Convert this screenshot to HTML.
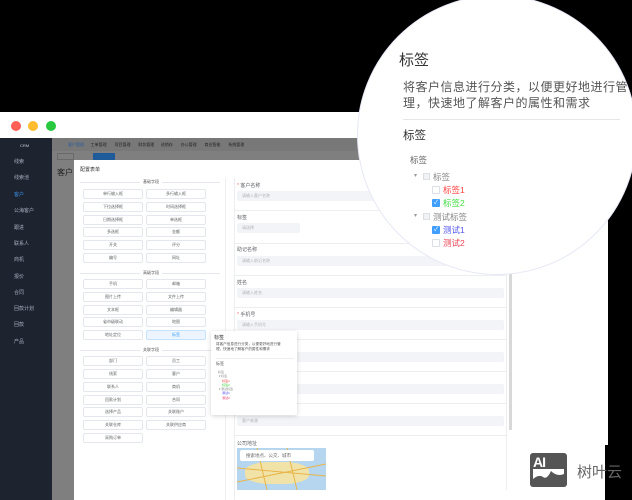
<!DOCTYPE html>
<html><head><meta charset="utf-8"><style>
*{margin:0;padding:0;box-sizing:border-box}
body{width:632px;height:500px;background:#000;position:relative;overflow:hidden;font-family:"Liberation Sans","Noto Sans CJK SC",sans-serif;color:#333}
.a{position:absolute}
.t{position:absolute;white-space:nowrap}
.btn{position:absolute;width:60px;height:10px;border:1px solid #e4e7ed;border-radius:2px;font-size:4px;line-height:8px;text-align:center;color:#606266;background:#fff}
.side{position:absolute;left:14px;font-size:5px;color:#aab;white-space:nowrap}
.lbl{position:absolute;left:237px;font-size:5px;color:#606266}
.inp{position:absolute;left:237px;width:267px;height:10px;background:#f3f4f7;border-radius:2px;font-size:4px;color:#b0b3b8;line-height:10px;padding-left:5px}
.sep{position:absolute;left:234px;width:273px;height:1px;background:#eceef2}
.tr{font-size:8.5px}
</style></head><body>
<div class="a" style="left:0;top:112px;width:608px;height:388px;background:#fff"></div>
<div class="a" style="left:11px;top:121px;width:10px;height:10px;border-radius:50%;background:#fe5f57"></div>
<div class="a" style="left:28px;top:121px;width:10px;height:10px;border-radius:50%;background:#febc2e"></div>
<div class="a" style="left:46px;top:121px;width:10px;height:10px;border-radius:50%;background:#28c840"></div>
<div class="a" style="left:0;top:138px;width:52px;height:362px;background:#1d2430"></div>
<div class="t" style="left:20px;top:143px;font-size:4px;color:#ccd">CRM</div>
<div class="side" style="top:158px">线索</div>
<div class="side" style="top:174px">线索池</div>
<div class="side" style="top:191px;color:#3a8ee6">客户</div>
<div class="side" style="top:207px">公海客户</div>
<div class="side" style="top:224px">跟进</div>
<div class="side" style="top:240px">联系人</div>
<div class="side" style="top:256px">商机</div>
<div class="side" style="top:273px">报价</div>
<div class="side" style="top:289px">合同</div>
<div class="side" style="top:305px">回款计划</div>
<div class="side" style="top:321px">回款</div>
<div class="side" style="top:338px">产品</div>
<div class="a" style="left:52px;top:138px;width:556px;height:362px;background:#7f7f7f"></div>
<div class="a" style="left:52px;top:138px;width:556px;height:13px;background:#787878"></div>
<div class="t" style="left:68px;top:142px;font-size:4px;color:#2a5d99">客户管理 &nbsp;&nbsp;&nbsp;&nbsp; <span style="color:#222">工单管理 &nbsp;&nbsp;&nbsp;&nbsp;&nbsp; 项目管理 &nbsp;&nbsp;&nbsp;&nbsp;&nbsp; 财务管理 &nbsp;&nbsp;&nbsp;&nbsp; 进销存 &nbsp;&nbsp;&nbsp;&nbsp;&nbsp; 办公管理 &nbsp;&nbsp;&nbsp;&nbsp;&nbsp; 商业智能 &nbsp;&nbsp;&nbsp;&nbsp;&nbsp; 系统管理</span></div>
<div class="a" style="left:57px;top:153px;width:17px;height:7px;border:1px solid #6a6a6a;font-size:3px"></div>
<div class="a" style="left:93px;top:153px;width:22px;height:7px;background:#1f5a99"></div>
<div class="t" style="left:57px;top:167px;font-size:8px;color:#222">客户</div>
<div class="a" style="left:74px;top:160px;width:534px;height:340px;background:#fff"></div>
<div class="t" style="left:80px;top:166px;font-size:5px;color:#333">配置表单</div>
<div class="a" style="left:225px;top:178px;width:1px;height:322px;background:#eceef2"></div>
<div class="a" style="left:80px;top:182px;width:140px;height:1px;background:#e4e7ed"></div>
<div class="t" style="left:140px;top:179px;font-size:4px;color:#555;background:#fff;padding:0 3px">基础字段</div>
<div class="a" style="left:80px;top:273px;width:140px;height:1px;background:#e4e7ed"></div>
<div class="t" style="left:140px;top:270px;font-size:4px;color:#555;background:#fff;padding:0 3px">高级字段</div>
<div class="a" style="left:80px;top:350px;width:140px;height:1px;background:#e4e7ed"></div>
<div class="t" style="left:140px;top:347px;font-size:4px;color:#555;background:#fff;padding:0 3px">关联字段</div>
<div class="btn" style="left:83px;top:189px">单行输入框</div><div class="btn" style="left:146px;top:189px">多行输入框</div>
<div class="btn" style="left:83px;top:202px">下拉选择框</div><div class="btn" style="left:146px;top:202px">时间选择框</div>
<div class="btn" style="left:83px;top:215px">日期选择框</div><div class="btn" style="left:146px;top:215px">单选框</div>
<div class="btn" style="left:83px;top:227px">多选框</div><div class="btn" style="left:146px;top:227px">金额</div>
<div class="btn" style="left:83px;top:240px">开关</div><div class="btn" style="left:146px;top:240px">评分</div>
<div class="btn" style="left:83px;top:253px">编号</div><div class="btn" style="left:146px;top:253px">网址</div>
<div class="btn" style="left:83px;top:279px">手机</div><div class="btn" style="left:146px;top:279px">邮箱</div>
<div class="btn" style="left:83px;top:292px">图片上传</div><div class="btn" style="left:146px;top:292px">文件上传</div>
<div class="btn" style="left:83px;top:305px">文本框</div><div class="btn" style="left:146px;top:305px">编辑器</div>
<div class="btn" style="left:83px;top:317px">省市级联动</div><div class="btn" style="left:146px;top:317px">地图</div>
<div class="btn" style="left:83px;top:330px">地址定位</div><div class="btn" style="left:146px;top:330px;background:#ecf5ff;border-color:#c6e2ff;color:#409eff">标签</div>
<div class="btn" style="left:83px;top:356px">部门</div><div class="btn" style="left:146px;top:356px">员工</div>
<div class="btn" style="left:83px;top:369px">线索</div><div class="btn" style="left:146px;top:369px">客户</div>
<div class="btn" style="left:83px;top:382px">联系人</div><div class="btn" style="left:146px;top:382px">商机</div>
<div class="btn" style="left:83px;top:395px">回款计划</div><div class="btn" style="left:146px;top:395px">合同</div>
<div class="btn" style="left:83px;top:407px">选择产品</div><div class="btn" style="left:146px;top:407px">关联账户</div>
<div class="btn" style="left:83px;top:420px">关联仓库</div><div class="btn" style="left:146px;top:420px">关联供应商</div>
<div class="btn" style="left:83px;top:433px">采购订单</div>
<div class="a" style="left:234px;top:178px;width:273px;height:322px;border-left:1px solid #eceef2;border-right:1px solid #eceef2"></div>
<div class="lbl" style="top:182px"><span style="color:#f56c6c">* </span>客户名称</div>
<div class="inp" style="top:191px">请输入客户名称</div>
<div class="sep" style="top:210px"></div>
<div class="lbl" style="top:214px">标签</div>
<div class="inp" style="top:223px;width:63px">请选择</div>
<div class="sep" style="top:243px"></div>
<div class="lbl" style="top:246px">助记名称</div>
<div class="inp" style="top:256px">请输入助记名称</div>
<div class="sep" style="top:275px"></div>
<div class="lbl" style="top:279px">姓名</div>
<div class="inp" style="top:288px">请输入姓名</div>
<div class="sep" style="top:307px"></div>
<div class="lbl" style="top:311px"><span style="color:#f56c6c">* </span>手机号</div>
<div class="inp" style="top:320px">请输入手机号</div>
<div class="sep" style="top:339px"></div>
<div class="inp" style="top:352px"></div>
<div class="sep" style="top:371px"></div>
<div class="inp" style="top:384px"></div>
<div class="sep" style="top:403px"></div>
<div class="inp" style="top:416px">客户来源</div>
<div class="sep" style="top:435px"></div>
<div class="lbl" style="top:440px">公司地址</div>
<div class="a" style="left:237px;top:448px;width:89px;height:42px;background:#b5d6ee;overflow:hidden">
<div class="a" style="left:8px;top:14px;width:64px;height:22px;background:#f1e3a8;border-radius:40%"></div>
<svg class="a" style="left:0;top:0" width="89" height="42"><path d="M0 20 L89 28 M20 0 L30 42 M50 0 L60 42 M0 34 L89 16" stroke="#e8b54a" stroke-width="1" fill="none"/></svg>
<div class="a" style="left:3px;top:2px;width:74px;height:11px;background:#fff;font-size:4.5px;color:#666;line-height:11px;padding-left:6px;border-radius:2px">搜索地点、公交、城市</div></div>
<div class="a" style="left:237px;top:490px;width:271px;height:10px;background:#fff"></div>
<div class="a" style="left:509px;top:260px;width:3px;height:170px;background:#d8d8d8"></div>
<div class="a" style="left:211px;top:331px;width:86px;height:84px;background:#fff;box-shadow:0 1px 5px rgba(0,0,0,.18);border-radius:2px"></div>
<div class="t" style="left:214px;top:334px;font-size:5px;color:#333">标签</div>
<div class="t" style="left:216px;top:342px;font-size:3.6px;color:#555;line-height:5px">将客户信息进行分类，以便更好地进行管<br>理，快速地了解客户的属性和需求</div>
<div class="a" style="left:216px;top:358px;width:78px;height:1px;background:#eee"></div>
<div class="t" style="left:216px;top:361px;font-size:4px;color:#555">标签</div>
<div class="t" style="left:218px;top:370px;font-size:3px;color:#888;line-height:4.3px">标签<br>&nbsp;▾ 标签<br>&nbsp;&nbsp;&nbsp;&nbsp;&nbsp;<span style="color:#f33">标签1</span><br>&nbsp;&nbsp;&nbsp;&nbsp;&nbsp;<span style="color:#3c3">标签2</span><br>&nbsp;▾ 测试标签<br>&nbsp;&nbsp;&nbsp;&nbsp;&nbsp;<span style="color:#44f">测试1</span><br>&nbsp;&nbsp;&nbsp;&nbsp;&nbsp;<span style="color:#e36">测试2</span></div>
<div class="a" style="left:605px;top:445px;width:27px;height:55px;background:#000"></div>
<div class="a" style="left:357px;top:-5px;width:280px;height:280px;border-radius:50%;background:#fff;border:1px solid #e6e8f5"></div>
<div class="t" style="left:399px;top:49px;font-size:15px;color:#333">标签</div>
<div class="t" style="left:403px;top:79px;font-size:12px;color:#555;line-height:16px;letter-spacing:.5px">将客户信息进行分类，以便更好地进行管<br>理，快速地了解客户的属性和需求</div>
<div class="a" style="left:403px;top:119px;width:217px;height:1px;background:#e6e6e6"></div>
<div class="t" style="left:403px;top:127px;font-size:11.5px;color:#333">标签</div>
<div class="t" style="left:410px;top:154px;font-size:8.5px;color:#666">标签</div>
<div class="t" style="left:414px;top:172px;font-size:6px;color:#999">▾</div>
<div class="a" style="left:423px;top:173px;width:7px;height:7px;border:1px solid #dcdfe6;background:#f0f2f5"></div>
<div class="t tr" style="left:433px;top:171px;color:#888">标签</div>
<div class="a" style="left:432px;top:186px;width:8px;height:8px;border:1px solid #dcdfe6;border-radius:1px"></div>
<div class="t tr" style="left:443px;top:184px;color:#f44">标签1</div>
<div class="a" style="left:432px;top:199px;width:8px;height:8px;background:#409eff;border-radius:1px;color:#fff;font-size:6px;line-height:8px;text-align:center">✓</div>
<div class="t tr" style="left:443px;top:197px;color:#4d4">标签2</div>
<div class="t" style="left:414px;top:212px;font-size:6px;color:#999">▾</div>
<div class="a" style="left:423px;top:213px;width:7px;height:7px;border:1px solid #dcdfe6;background:#f0f2f5"></div>
<div class="t tr" style="left:433px;top:211px;color:#888">测试标签</div>
<div class="a" style="left:432px;top:226px;width:8px;height:8px;background:#409eff;border-radius:1px;color:#fff;font-size:6px;line-height:8px;text-align:center">✓</div>
<div class="t tr" style="left:443px;top:224px;color:#55e">测试1</div>
<div class="a" style="left:432px;top:239px;width:8px;height:8px;border:1px solid #dcdfe6;border-radius:1px"></div>
<div class="t tr" style="left:443px;top:237px;color:#e45">测试2</div>
<div class="a" style="left:530px;top:453px;width:37px;height:34px;background:#555;border-radius:3px;overflow:hidden">
<div class="t" style="left:3px;top:1px;font-size:14px;font-weight:bold;color:#fff;letter-spacing:-1px">AI</div>
<div class="a" style="left:3px;top:16px;width:31px;height:15px;background:#fff"></div>
<svg class="a" style="left:3px;top:16px" width="31" height="15"><path d="M0 10 Q6 5 10 8 T18 2 Q24 8 31 5 V15 H0Z" fill="#555"/></svg></div>
<div class="t" style="left:577px;top:461px;font-size:15px;color:#666">树叶云</div>
</body></html>
